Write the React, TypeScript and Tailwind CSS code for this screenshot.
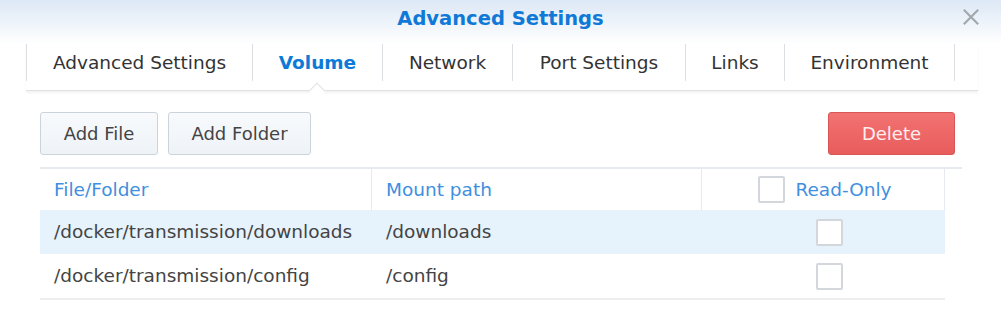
import React from 'react';

const tabs = [
    { label: 'Advanced Settings', w: 'w-[226px]' },
    { label: 'Volume', w: 'w-[130px]', active: true },
    { label: 'Network', w: 'w-[130px]' },
    { label: 'Port Settings', w: 'w-[173px]' },
    { label: 'Links', w: 'w-[99px]' },
    { label: 'Environment', w: 'w-[171px]' },
];

const rows = [
    { file: '/docker/transmission/downloads', mount: '/downloads', selected: true },
    { file: '/docker/transmission/config', mount: '/config', selected: false },
];

const Checkbox: React.FC = () => (
    <span className="block w-[27px] h-[27px] rounded-[2px] border-2 border-[#d3d7db] bg-white" />
);

const App: React.FC = () => {
    return (
        <div className="relative w-[1001px] h-[316px] overflow-hidden bg-white text-[#444] font-['DejaVu_Sans',sans-serif]">
            <header className="h-[44px] flex items-center justify-center bg-gradient-to-b from-[#dce8f5] to-white">
                <h1 className="text-[19.5px] font-bold text-[#1078d6] -mt-[7px]">Advanced Settings</h1>
                <button className="absolute right-[21px] top-[8px] w-[18px] h-[18px] text-[#a3a8ad]">
                    <svg viewBox="0 0 20 20" className="w-full h-full" fill="none" stroke="currentColor" strokeWidth="2.4">
                        <path d="M2 2 L18 18 M18 2 L2 18" />
                    </svg>
                </button>
            </header>

            <div className="relative ml-[26px] w-[952px] h-[47px] border-b border-[#dfe2e5] shadow-[0_2px_2px_rgba(0,0,0,0.05)]">
                <div className="flex">
                    {tabs.map((t, i) => (
                        <div
                            key={t.label}
                            className={`${t.w} h-[37px] flex items-center justify-center border-l border-[#dcdfe2] ${i === tabs.length - 1 ? 'border-r' : ''} text-[18.5px] ${t.active ? 'font-bold text-[#0d7ad8]' : 'text-[#333]'}`}
                        >
                            {t.label}
                        </div>
                    ))}
                </div>
                <span className="absolute left-[285px] top-[41px] w-[12px] h-[12px] rotate-45 bg-white border-l border-t border-[#dfe2e5]" />
            </div>

            <div className="px-[40px] pt-[21px]">
                <div className="flex items-center gap-[10px]">
                    <button className="h-[43px] w-[118px] rounded-[3px] border border-[#cbd3dc] bg-gradient-to-b from-[#f8fafc] to-[#eef3f8] text-[18px] text-[#444]">
                        Add File
                    </button>
                    <button className="h-[43px] w-[143px] rounded-[3px] border border-[#cbd3dc] bg-gradient-to-b from-[#f8fafc] to-[#eef3f8] text-[18px] text-[#444]">
                        Add Folder
                    </button>
                    <button className="ml-auto mr-[6px] h-[43px] w-[127px] rounded-[3px] border border-[#d85656] bg-gradient-to-b from-[#f27272] to-[#e95c5c] text-[18px] text-[#ffeef0]">
                        Delete
                    </button>
                </div>

                <div className="mt-[12px] w-[922px] border-t-2 border-[#e6eaee]">
                    <div className="flex h-[41px] text-[18.5px] text-[#3f8fe0]">
                        <div className="w-[332px] flex items-center pl-[14px] border-r border-[#e6eaee]">File/Folder</div>
                        <div className="w-[330px] flex items-center pl-[14px] border-r border-[#e6eaee]">Mount path</div>
                        <div className="w-[243px] flex items-center justify-center gap-[10px] pl-[4px] border-r border-[#e6eaee]">
                            <Checkbox />
                            <span>Read-Only</span>
                        </div>
                    </div>
                    <div className="w-[905px] border-b-2 border-[#eceef0]">
                        {rows.map((r) => (
                            <div
                                key={r.file}
                                className={`flex h-[44px] text-[18.5px] text-[#444] ${r.selected ? 'bg-[#e6f3fd]' : ''}`}
                            >
                                <div className="w-[332px] flex items-center pl-[14px]">{r.file}</div>
                                <div className="w-[330px] flex items-center pl-[14px]">{r.mount}</div>
                                <div className="w-[243px] flex items-center justify-center pl-[12px]">
                                    <Checkbox />
                                </div>
                            </div>
                        ))}
                    </div>
                </div>
            </div>
        </div>
    );
};

export default App;
